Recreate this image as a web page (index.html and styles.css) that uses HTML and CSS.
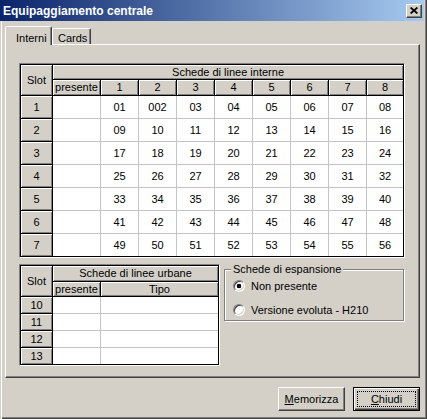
FILE: index.html
```html
<!DOCTYPE html>
<html lang="it">
<head>
<meta charset="utf-8">
<title>Equipaggiamento centrale</title>
<link rel="stylesheet" href="styles.css">
</head>
<body>
<div class="window">
  <div class="titlebar">
    <span class="title">Equipaggiamento centrale</span>
    <span class="close"><svg width="8" height="7" viewBox="0 0 8 7"><path d="M0.6 0.5L7.4 6.5M7.4 0.5L0.6 6.5" stroke="#000" stroke-width="1.7" fill="none"/></svg></span>
  </div>
  <div class="client">
    <div class="tabs">
      <div class="tab active">Interni</div>
      <div class="tab cards">Cards</div>
    </div>
    <div class="panel">
      <div class="grid">
        <table class="main">
          <colgroup>
            <col class="c-slot"><col class="c-pres">
            <col class="c-n"><col class="c-n"><col class="c-n"><col class="c-n">
            <col class="c-n"><col class="c-n"><col class="c-n"><col class="c-last">
          </colgroup>
          <tr class="h1"><th rowspan="2">Slot</th><th colspan="9">Schede di linee interne</th></tr>
          <tr class="h2"><th>presente</th><th>1</th><th>2</th><th>3</th><th>4</th><th>5</th><th>6</th><th>7</th><th>8</th></tr>
          <tr class="r"><th>1</th><td></td><td>01</td><td>002</td><td>03</td><td>04</td><td>05</td><td>06</td><td>07</td><td>08</td></tr>
          <tr class="r"><th>2</th><td></td><td>09</td><td>10</td><td>11</td><td>12</td><td>13</td><td>14</td><td>15</td><td>16</td></tr>
          <tr class="r"><th>3</th><td></td><td>17</td><td>18</td><td>19</td><td>20</td><td>21</td><td>22</td><td>23</td><td>24</td></tr>
          <tr class="r"><th>4</th><td></td><td>25</td><td>26</td><td>27</td><td>28</td><td>29</td><td>30</td><td>31</td><td>32</td></tr>
          <tr class="r"><th>5</th><td></td><td>33</td><td>34</td><td>35</td><td>36</td><td>37</td><td>38</td><td>39</td><td>40</td></tr>
          <tr class="r"><th>6</th><td></td><td>41</td><td>42</td><td>43</td><td>44</td><td>45</td><td>46</td><td>47</td><td>48</td></tr>
          <tr class="r last"><th>7</th><td></td><td>49</td><td>50</td><td>51</td><td>52</td><td>53</td><td>54</td><td>55</td><td>56</td></tr>
        </table>
      </div>
      <div class="lower">
        <div class="grid">
          <table class="urban">
            <colgroup><col class="c-slot"><col class="c-pres"><col class="c-tipo"></colgroup>
            <tr class="u1"><th rowspan="2">Slot</th><th colspan="2">Schede di linee urbane</th></tr>
            <tr class="u2"><th>presente</th><th>Tipo</th></tr>
            <tr class="ur"><th>10</th><td></td><td></td></tr>
            <tr class="ur"><th>11</th><td></td><td></td></tr>
            <tr class="ur"><th>12</th><td></td><td></td></tr>
            <tr class="ur last"><th>13</th><td></td><td></td></tr>
          </table>
        </div>
        <fieldset class="group">
          <legend>Schede di espansione</legend>
          <div class="opt"><span class="radio checked"></span><span>Non presente</span></div>
          <div class="opt"><span class="radio"></span><span>Versione evoluta - H210</span></div>
        </fieldset>
      </div>
    </div>
    <div class="actions">
      <div class="btn"><span><u>M</u>emorizza</span></div>
      <div class="btn default"><span class="focus"><span><u>C</u>hiudi</span></span></div>
    </div>
  </div>
</div>
</body>
</html>
```

FILE: styles.css
```css
* { box-sizing: border-box; }
html, body { margin: 0; padding: 0; }
body {
  width: 427px;
  height: 419px;
  overflow: hidden;
  background: #d4d0c8;
  font-family: "Liberation Sans", Arial, sans-serif;
  font-size: 11px;
  color: #000;
}
.window {
  width: 427px;
  height: 419px;
  display: flex;
  flex-direction: column;
  background: #d4d0c8;
  box-shadow: inset 1px 0 #d4d0c8, inset 2px 0 #fff, inset -1px -1px #404040, inset -2px -2px #808080;
}
.titlebar {
  height: 21px;
  margin-right: 3px;
  background: linear-gradient(to right, #0a246a, #a6caf0);
  display: flex;
  align-items: center;
  justify-content: space-between;
  padding: 0 2px 0 3px;
}
.title {
  color: #fff;
  font-weight: bold;
  font-size: 12px;
}
.close {
  width: 16px;
  height: 14px;
  background: #d4d0c8;
  border: 1px solid;
  border-color: #fff #404040 #404040 #fff;
  box-shadow: inset -1px -1px #808080;
  display: flex;
  align-items: center;
  justify-content: center;
}
.client {
  flex: 1;
  display: flex;
  flex-direction: column;
  padding: 5px 7px 0 5px;
}
.tabs {
  display: flex;
  align-items: flex-end;
  height: 18px;
  position: relative;
  z-index: 1;
}
.tab {
  height: 16px;
  border: 1px solid;
  border-bottom: 0;
  border-color: #fff #404040 transparent #fff;
  box-shadow: inset -1px 0 #808080;
  border-radius: 2px 2px 0 0;
  line-height: 14px;
  background: #d4d0c8;
}
.tab.active {
  width: 47px;
  height: 19px;
  margin-bottom: -1px;
  padding: 4px 0 0 10px;
}
.tab.cards {
  width: 39px;
  padding: 2px 0 0 5px;
}
.panel {
  height: 334px;
  background: #d4d0c8;
  border: 1px solid;
  border-color: #fff #404040 #404040 #fff;
  box-shadow: inset -1px -1px #808080;
  padding: 18px 0 0 13px;
  display: flex;
  flex-direction: column;
  align-items: flex-start;
}
.grid {
  border: 1px solid;
  border-color: #808080 #fff #fff #808080;
}
table {
  border-collapse: separate;
  border-spacing: 0;
  table-layout: fixed;
  border: 1px solid #000;
  background: #fff;
}
table.main { width: 384px; }
table.urban { width: 199px; }
.c-slot { width: 32px; }
.c-pres { width: 48px; }
.c-n { width: 38px; }
.c-last { width: 36px; }
.c-tipo { width: 117px; }
th, td {
  padding: 0;
  text-align: center;
  font-weight: normal;
  line-height: 13px;
  white-space: nowrap;
  overflow: hidden;
}
td {
  border-right: 1px solid #c4c4c4;
  border-bottom: 1px solid #c4c4c4;
  background: #fff;
}
th {
  background: #d4d0c8;
  border-right: 1px solid #000;
  border-bottom: 1px solid #000;
  box-shadow: inset 1px 1px #fff, inset -1px -1px #808080;
}
tr > :last-child { border-right: 0; }
tr.last > * { border-bottom: 0; }
tr.h1 { height: 15px; }
tr.h2 { height: 16px; }
tr.r { height: 23px; }
tr.r.last { height: 22px; }
tr.u1 { height: 16px; }
tr.u2 { height: 15px; }
tr.ur { height: 17px; }
tr.ur.last { height: 16px; }
.lower {
  display: flex;
  align-items: flex-start;
  gap: 4px;
  margin-top: 6px;
}
.group {
  margin: -1px 0 0 0;
  width: 180px;
  height: 58px;
  border: 1px solid #808080;
  box-shadow: 1px 1px #fff, inset 1px 1px #fff;
  padding: 0 0 0 8px;
  display: flex;
  flex-direction: column;
  gap: 5px;
}
.group legend {
  padding: 0 2px;
  margin-left: -2px;
  line-height: 13px;
  background: #d4d0c8;
}
.opt {
  display: flex;
  align-items: center;
  height: 19px;
  gap: 6px;
}
.radio {
  width: 12px;
  height: 12px;
  border-radius: 50%;
  border: 1px solid;
  border-color: #808080 #fff #fff #808080;
  box-shadow: inset 1px 1px #404040, inset -1px -1px #d4d0c8;
  background: #fff;
  flex: none;
}
.radio.checked {
  background: radial-gradient(circle at center, #000 0 2px, #fff 2.6px);
}
.actions {
  display: flex;
  justify-content: flex-end;
  gap: 8px;
  margin-top: 9px;
}
.btn {
  width: 67px;
  height: 24px;
  border: 1px solid;
  border-color: #fff #404040 #404040 #fff;
  box-shadow: inset -1px -1px #808080;
  display: flex;
  align-items: center;
  justify-content: center;
  background: #d4d0c8;
}
.btn.default {
  border: 1px solid #000;
  box-shadow: inset 1px 1px #fff, inset -1px -1px #404040, inset -2px -2px #808080;
  padding: 3px;
}
.focus {
  flex: 1;
  align-self: stretch;
  border: 1px dotted #000;
  display: flex;
  align-items: center;
  justify-content: center;
}
```
